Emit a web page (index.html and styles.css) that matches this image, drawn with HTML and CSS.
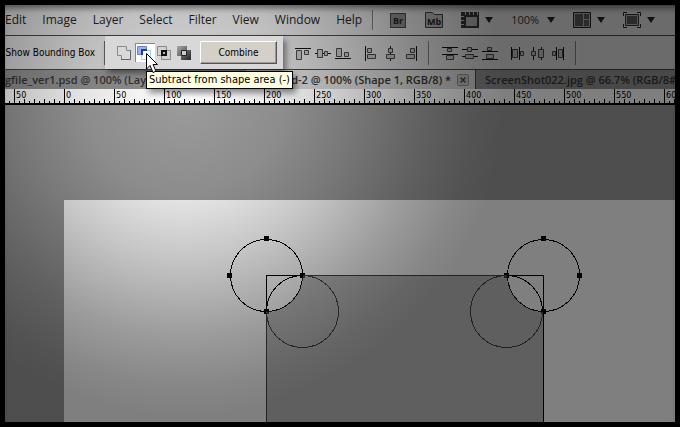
FILE: index.html
```html
<!DOCTYPE html>
<html lang="en">
<head>
<meta charset="utf-8">
<title>Image editor</title>
<link rel="stylesheet" href="styles.css">
</head>
<body>
<div class="app">
  <header class="menubar">
    <nav class="menus">
      <a href="#">Edit</a><a href="#">Image</a><a href="#">Layer</a><a href="#">Select</a><a href="#">Filter</a><a href="#">View</a><a href="#">Window</a><a href="#">Help</a>
    </nav>
    <span class="sep"></span>
    <div class="launchers">
      <button class="bridge" aria-label="Bridge"><span>Br</span></button>
      <button class="mini" aria-label="Mini Bridge">
        <svg width="18" height="16"><path d="M.5 15.500V.5H7.500L9.500 2.500H17.500V15.500Z" fill="#aaa" stroke="#3a3a3a"/></svg>
        <span>Mb</span>
      </button>
    </div>
    <div class="views">
      <button class="drop" aria-label="View extras">
        <svg width="18" height="16"><path d="M0 0H18V16H0Z" fill="#333"/><path d="M5 5H16V14H5Z" fill="#a8a8a8"/><path d="M4.500 0V3M8.500 0V3M12.500 0V3M16.500 0V3M0 4.500H3M0 8.500H3M0 12.500H3" stroke="#bbb"/></svg>
        <svg width="8" height="6"><path d="M0 0H8L4 6Z" fill="#222"/></svg>
      </button>
      <label class="drop zoom">
        <select aria-label="Zoom level"><option>100%</option></select>
        <svg width="8" height="6"><path d="M0 0H8L4 6Z" fill="#222"/></svg>
      </label>
      <button class="drop" aria-label="Arrange documents">
        <svg width="18" height="16"><path d="M.5 .5H17.500V15.500H.5Z" fill="#aaa" stroke="#222"/><path d="M2 2H10V14H2ZM11 2H16V7H11ZM11 8H16V14H11Z" fill="#555"/></svg>
        <svg width="8" height="6"><path d="M0 0H8L4 6Z" fill="#222"/></svg>
      </button>
      <button class="drop" aria-label="Screen mode">
        <svg width="18" height="16"><path d="M.5 4V.5H4M14 .5H17.500V4M17.500 12V15.500H14M4 15.500H.5V12" fill="none" stroke="#222"/><path d="M2.500 2.500H15.500V13.500H2.500Z" fill="#aaa" stroke="#333"/><path d="M4 4H14V12H4Z" fill="#555"/></svg>
        <svg width="8" height="6"><path d="M0 0H8L4 6Z" fill="#222"/></svg>
      </button>
    </div>
  </header>

  <div class="options">
    <div class="bounding">Show Bounding Box</div>
    <div class="spotlight">
      <button class="op" aria-label="Add to shape area">
        <svg width="16" height="16"><path d="M.5 1.500H9.500V5.500H13.500V14.500H4.500V10.500H.5Z" fill="#d9d9d9" stroke="#888"/><path d="M4 14.500H13.500V5" fill="none" stroke="#666"/></svg>
      </button>
      <button class="op picked" aria-label="Subtract from shape area">
        <svg width="16" height="16"><path d="M4.500 5.500H13.500V14.500H4.500Z" fill="#fff" stroke="#a5cdec"/><path d="M.5 1.500H9.500V4.500H4.500V9.500H.5Z" fill="#9ab0ef" stroke="#6c85d2"/><path d="M10 5H5V10" fill="none" stroke="#243c9c" stroke-width="2"/></svg>
        <span class="tip" role="tooltip">Subtract from shape area (-)</span>
        <svg class="pointer" width="14" height="22"><path d="M1.500 1.500V17L5 13.500L8 20.500L11 19.200L8 12.500H12.500Z" fill="#fff" stroke="#000"/></svg>
      </button>
      <button class="op" aria-label="Intersect shape areas">
        <svg width="16" height="16"><path d="M.5 1.500H9.500V10.500H.5Z" fill="#d0d0d0" stroke="#888"/><path d="M4.500 5.500H13.500V14.500H4.500Z" fill="#d0d0d0" stroke="#888"/><path d="M5 6H9V10H5Z" fill="#bbb" stroke="#111" stroke-width="2"/></svg>
      </button>
      <button class="op" aria-label="Exclude overlapping shape areas">
        <svg width="16" height="16"><defs><linearGradient id="ex" x2="1" y2="1"><stop stop-color="#aaa"/><stop offset="1" stop-color="#222"/></linearGradient></defs><path d="M0 1H10V5H14V15H4V11H0Z" fill="url(#ex)"/><path d="M4.500 5.500H9.500V10.500H4.500Z" fill="#ccc" stroke="#222"/></svg>
      </button>
      <button class="combine">Combine</button>
    </div>
    <div class="aligns">
      <button class="al" aria-label="Align top edges"><svg width="16" height="16"><path class="ln" d="M0 3.500H16"/><path class="bx" d="M1.500 5.500H6.500V14.500H1.500ZM9.500 5.500H13.500V9.500H9.500Z"/></svg></button>
      <button class="al" aria-label="Align vertical centers"><svg width="16" height="16"><path class="ln" d="M0 8.500H16"/><path class="bx" d="M2.500 4.500H7.500V12.500H2.500ZM9.500 6.500H12.500V10.500H9.500Z"/></svg></button>
      <button class="al" aria-label="Align bottom edges"><svg width="16" height="16"><path class="ln" d="M0 13.500H16"/><path class="bx" d="M1.500 3.500H6.500V11.500H1.500ZM9.500 7.500H13.500V11.500H9.500Z"/></svg></button>
    </div>
    <div class="aligns">
      <button class="al" aria-label="Align left edges"><svg width="16" height="16"><path class="ln" d="M2.500 1V16"/><path class="bx" d="M4.500 3.500H8.500V7.500H4.500ZM4.500 9.500H12.500V13.500H4.500Z"/></svg></button>
      <button class="al" aria-label="Align horizontal centers"><svg width="16" height="16"><path class="ln" d="M7.500 1V16"/><path class="bx" d="M5.500 3.500H9.500V7.500H5.500ZM3.500 9.500H11.500V13.500H3.500Z"/></svg></button>
      <button class="al" aria-label="Align right edges"><svg width="16" height="16"><path class="ln" d="M13.500 1V16"/><path class="bx" d="M7.500 3.500H11.500V7.500H7.500ZM3.500 9.500H11.500V13.500H3.500Z"/></svg></button>
    </div>
    <span class="sep"></span>
    <div class="aligns">
      <button class="al" aria-label="Distribute top edges"><svg width="16" height="16"><path class="bx" d="M5.500 3.500H9.500V6.500H5.500ZM4.500 10.500H11.500V14.500H4.500Z"/><path class="ln" d="M0 2.500H16M0 9.500H16"/></svg></button>
      <button class="al" aria-label="Distribute vertical centers"><svg width="16" height="16"><path class="ln" d="M0 4.500H16M0 11.500H16"/><path class="bx" d="M5.500 2.500H9.500V6.500H5.500ZM3.500 9.500H11.500V13.500H3.500Z"/></svg></button>
      <button class="al" aria-label="Distribute bottom edges"><svg width="16" height="16"><path class="bx" d="M5.500 2.500H9.500V5.500H5.500ZM4.500 9.500H11.500V13.500H4.500Z"/><path class="ln" d="M0 6.500H16M0 14.500H16"/></svg></button>
    </div>
    <div class="aligns">
      <button class="al" aria-label="Distribute left edges"><svg width="16" height="16"><path class="ln" d="M1.500 2V15M9.500 2V15"/><path class="bx" d="M2.500 4.500H7.500V12.500H2.500ZM10.500 6.500H13.500V10.500H10.500Z"/></svg></button>
      <button class="al" aria-label="Distribute horizontal centers"><svg width="16" height="16"><path class="ln" d="M3.500 2V15M11.500 2V15"/><path class="bx" d="M1.500 6.500H5.500V10.500H1.500ZM8.500 4.500H13.500V12.500H8.500Z"/></svg></button>
      <button class="al" aria-label="Distribute right edges"><svg width="16" height="16"><path class="ln" d="M6.500 2V15M13.500 2V15"/><path class="bx" d="M2.500 6.500H5.500V10.500H2.500ZM8.500 4.500H12.500V12.500H8.500Z"/></svg></button>
    </div>
    <span class="sep"></span>
  </div>

  <div class="tabs">
    <div class="tab first">gfile_ver1.psd @ 100% (Lay</div>
    <div class="tab active">d-2 @ 100% (Shape 1, RGB/8) *
      <button class="close" aria-label="Close"><svg width="12" height="12"><rect x=".5" y=".5" width="11" height="11" rx="1" fill="#c4c4c4" stroke="#888"/><path d="M3.500 3.500L8.500 8.500M8.500 3.500L3.500 8.500" stroke="#444" stroke-width="1.500"/></svg></button>
    </div>
    <div class="tab other">ScreenShot022.jpg @ 66.7% (RGB/8#</div>
  </div>

  <svg class="ruler" width="100%" height="16">
    <defs>
      <pattern id="ticks" x="9" width="50" height="16" patternUnits="userSpaceOnUse">
        <path d="M.5 0V15M10.500 10V15M20.500 10V15M30.500 10V15M40.500 10V15M5.500 12V15M15.500 12V15M25.500 12V15M35.500 12V15M45.500 12V15" stroke="#000"/>
      </pattern>
    </defs>
    <rect width="100%" height="16" fill="url(#ticks)"/>
    <path d="M0 15H3000" stroke="#000" stroke-width="2"/>
    <g>
      <text x="11" y="9">50</text><text x="61" y="9">0</text><text x="111" y="9">50</text><text x="161" y="9">100</text><text x="211" y="9">150</text><text x="261" y="9">200</text><text x="311" y="9">250</text><text x="361" y="9">300</text><text x="411" y="9">350</text><text x="461" y="9">400</text><text x="511" y="9">450</text><text x="561" y="9">500</text><text x="611" y="9">550</text><text x="661" y="9">600</text>
    </g>
  </svg>

  <main class="workspace">
    <svg width="100%" height="100%">
      <rect x="59" y="95" width="100%" height="100%" fill="#fff"/>
      <g fill="none" stroke="#000" shape-rendering="crispEdges">
        <path d="M261.500 1000V170.500H538.500V1000"/>
        <circle cx="261.500" cy="170.500" r="36"/>
        <circle cx="297.500" cy="206.500" r="36"/>
        <circle cx="538.500" cy="170.500" r="36"/>
        <circle cx="501.500" cy="206.500" r="36"/>
      </g>
      <path d="M259 131h5v5h-5zM222 168h5v5h-5zM295 168h5v5h-5zM259 204h5v5h-5zM536 131h5v5h-5zM499 168h5v5h-5zM572 168h5v5h-5zM536 204h5v5h-5z"/>
      <path d="M298 170H502A37 37 0 0 0 538 207V1000H261V207A37 37 0 0 0 298 170Z" fill="#828282" fill-opacity=".52"/>
    </svg>
  </main>
</div>
</body>
</html>
```
FILE: styles.css
```css
* { box-sizing: border-box; }

body {
  margin: 0;
  background: #000;
  color: #000;
  font-family: "Open Sans", "Noto Sans", sans-serif;
}

button {
  margin: 0;
  padding: 0;
  border: 0;
  background: none;
  font: inherit;
  color: inherit;
}

svg { display: block; flex: none; }

.app {
  position: relative;
  display: flex;
  flex-direction: column;
  height: 100vh;
  border: 5px solid #000;
  overflow: hidden;
  background: #9c9c9c;
}

/* Dims everything except the spotlighted tools. */
.app::after {
  content: "";
  position: absolute;
  inset: 0;
  z-index: 1;
  pointer-events: none;
  background: radial-gradient(circle at 180px 90px, rgba(0, 0, 0, 0), rgba(0, 0, 0, .1) 100px, rgba(0, 0, 0, .22) 160px, rgba(0, 0, 0, .39) 240px, rgba(0, 0, 0, .47) 290px, rgba(0, 0, 0, .5) 320px);
  box-shadow: inset 0 7px 6px -4px rgba(0, 0, 0, .5);
}

.sep {
  width: 2px;
  height: 24px;
  border-left: 1px solid #777;
  border-right: 1px solid #ddd;
}

.menubar {
  display: flex;
  align-items: center;
  flex: none;
  height: 31px;
  border-bottom: 1px solid #444;
  background: #d6d6d6;
}

.menubar .sep { height: 20px; margin-left: 10px; }

.menus { display: flex; gap: 16px; font-size: 12px; line-height: 18px; }
.menus a { color: #222; text-decoration: none; }

.launchers { display: flex; align-items: center; gap: 19px; margin-left: 16px; color: #222; font: bold 9px/13px "Open Sans", sans-serif; }

.bridge {
  width: 16px;
  height: 15px;
  border: 1px solid #444;
  background: #888;
}

.mini { position: relative; }
.mini span { position: absolute; inset: 3px 0 0; text-align: center; }

.views { display: flex; align-items: center; gap: 18px; margin-left: 18px; }
.drop { display: flex; align-items: center; gap: 6px; }
.zoom { gap: 8px; }

.zoom select {
  width: 28px;
  padding: 0;
  border: 0;
  appearance: none;
  background: none;
  color: #333;
  font: 11px/16px "Open Sans", sans-serif;
}

.options {
  display: flex;
  align-items: center;
  flex: none;
  height: 34px;
  border-bottom: 1px solid #444;
  background: #d6d6d6;
  font: 11px/16px "DejaVu Sans Condensed", "DejaVu Sans", sans-serif;
}

.bounding {
  display: flex;
  justify-content: flex-end;
  flex: none;
  width: 100px;
  padding-right: 9px;
  border-right: 1px solid #666;
  font-size: 10px;
  line-height: 24px;
  white-space: nowrap;
}

.spotlight {
  position: relative;
  z-index: 2;
  display: flex;
  align-items: center;
  flex: none;
  height: 33px;
  padding: 0 6px 0 10px;
  background: #d8d8d8;
  box-shadow: 3px 4px 6px rgba(0, 0, 0, .45);
}

.op {
  position: relative;
  display: flex;
  align-items: center;
  justify-content: center;
  width: 20px;
  height: 19px;
}

.picked {
  background: #fff;
  box-shadow: inset 1px 1px #888;
}

.tip {
  position: absolute;
  top: 28px;
  left: 11px;
  padding: 0 2px;
  border: 1px solid #000;
  background: #ffffe1;
  box-shadow: 3px 4px 6px rgba(0, 0, 0, .45);
  line-height: 16px;
  white-space: nowrap;
}

.pointer { position: absolute; top: 9px; left: 10px; z-index: 3; }

.combine {
  width: 77px;
  height: 23px;
  margin-left: 5px;
  border: 1px solid;
  border-color: #fff #555 #555 #fff;
  background: #d4d0c8;
  box-shadow: inset -1px -1px #999;
  font-size: 10px;
}

.aligns { display: flex; gap: 4px; margin-left: 12px; }
.al { width: 16px; height: 16px; }
.ln { fill: none; stroke: #111; }
.bx { fill: #bbb; stroke: #444; }
.options > .sep { margin-left: 9px; }

.tabs {
  display: flex;
  flex: none;
  height: 19px;
  background: #909090;
  font: 600 11px/19px "Open Sans", sans-serif;
  white-space: nowrap;
}

.tab { color: #333; overflow: hidden; }
.first { flex: none; width: 241px; }

.active {
  display: flex;
  align-items: center;
  justify-content: flex-end;
  gap: 6px;
  flex: none;
  width: 230px;
  padding-right: 6px;
  border-right: 1px solid #444;
  background: #d6d6d6;
}

.other { flex: 1; padding-left: 9px; }

.ruler { background: #fff; }
.ruler text { font: 9px "DejaVu Sans Condensed", "DejaVu Sans", sans-serif; }

.workspace { flex: 1; min-height: 0; overflow: hidden; }
```
